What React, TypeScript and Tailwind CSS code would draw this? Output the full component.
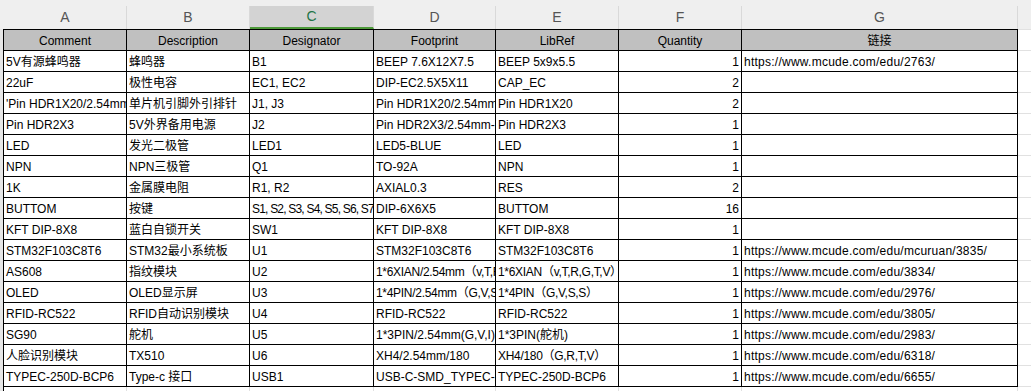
const colW = [
  "w-[123px]",
  "w-[123px]",
  "w-[124px]",
  "w-[122px]",
  "w-[123px]",
  "w-[123px]",
  "w-[276px]",
];

const letters = ["A", "B", "C", "D", "E", "F", "G"];
const heads = ["Comment", "Description", "Designator", "Footprint", "LibRef", "Quantity", "链接"];

const rows: string[][] = [
  ["5V有源蜂鸣器", "蜂鸣器", "B1", "BEEP 7.6X12X7.5", "BEEP 5x9x5.5", "1", "https://www.mcude.com/edu/2763/"],
  ["22uF", "极性电容", "EC1, EC2", "DIP-EC2.5X5X11", "CAP_EC", "2", ""],
  ["'Pin HDR1X20/2.54mm", "单片机引脚外引排针", "J1, J3", "Pin HDR1X20/2.54mm-S", "Pin HDR1X20", "2", ""],
  ["Pin HDR2X3", "5V外界备用电源", "J2", "Pin HDR2X3/2.54mm-S", "Pin HDR2X3", "1", ""],
  ["LED", "发光二极管", "LED1", "LED5-BLUE", "LED", "1", ""],
  ["NPN", "NPN三极管", "Q1", "TO-92A", "NPN", "1", ""],
  ["1K", "金属膜电阻", "R1, R2", "AXIAL0.3", "RES", "2", ""],
  ["BUTTOM", "按键", "S1, S2, S3, S4, S5, S6, S7", "DIP-6X6X5", "BUTTOM", "16", ""],
  ["KFT DIP-8X8", "蓝白自锁开关", "SW1", "KFT DIP-8X8", "KFT DIP-8X8", "1", ""],
  ["STM32F103C8T6", "STM32最小系统板", "U1", "STM32F103C8T6", "STM32F103C8T6", "1", "https://www.mcude.com/edu/mcuruan/3835/"],
  ["AS608", "指纹模块", "U2", "1*6XIAN/2.54mm（v,T,R,G,T,V）", "1*6XIAN（v,T,R,G,T,V）", "1", "https://www.mcude.com/edu/3834/"],
  ["OLED", "OLED显示屏", "U3", "1*4PIN/2.54mm（G,V,S,S）", "1*4PIN（G,V,S,S）", "1", "https://www.mcude.com/edu/2976/"],
  ["RFID-RC522", "RFID自动识别模块", "U4", "RFID-RC522", "RFID-RC522", "1", "https://www.mcude.com/edu/3805/"],
  ["SG90", "舵机", "U5", "1*3PIN/2.54mm(G,V,I)", "1*3PIN(舵机)", "1", "https://www.mcude.com/edu/2983/"],
  ["人脸识别模块", "TX510", "U6", "XH4/2.54mm/180", "XH4/180（G,R,T,V）", "1", "https://www.mcude.com/edu/6318/"],
  ["TYPEC-250D-BCP6", "Type-c 接口", "USB1", "USB-C-SMD_TYPEC-250D-BCP6", "TYPEC-250D-BCP6", "1", "https://www.mcude.com/edu/6655/"],
];

function cellExtra(text: string, col: number) {
  if (col === 5) return "text-right";
  if (col === 6) return "tracking-[0.25px]";
  if (text.startsWith("S1, S2")) return "tracking-[-0.8px]";
  if (text.includes("（")) return "tracking-[-0.3px]";
  return "";
}

export default function App() {
  return (
    <div className="w-[1031px] h-[391px] overflow-hidden bg-white font-['Liberation_Sans','Noto_Sans_CJK_SC',sans-serif] text-[12px] text-black">
      {/* column letters */}
      <div className="flex h-[29px] bg-[#efefef] pt-[6px]">
        <div className="w-[4px] shrink-0" />
        {letters.map((l, i) => (
          <div
            key={l}
            className={`${colW[i]} shrink-0 flex items-center justify-center border-r border-[#d9d9d9] text-[14px] ${
              l === "C"
                ? "bg-[#d3d3d3] text-[#217346] border-b-2 border-b-[#4e9a3a]"
                : "text-[#555]"
            }`}
          >
            {l}
          </div>
        ))}
        <div className="flex-1" />
      </div>

      <div className="flex">
        <div className="w-[3px] shrink-0 bg-[#e6e6e6]" />
        <div className="shrink-0 border-l border-t border-black">
          <div className="flex h-[21px] bg-[#c0c0c0]">
            {heads.map((h, i) => (
              <div
                key={h}
                className={`${colW[i]} shrink-0 border-r border-b border-black text-center leading-[22px]`}
              >
                {h}
              </div>
            ))}
          </div>
          {rows.map((r, ri) => (
            <div key={ri} className="flex h-[21px]">
              {r.map((c, i) => (
                <div
                  key={i}
                  className={`${colW[i]} shrink-0 overflow-hidden whitespace-nowrap border-r border-b border-black px-[2px] leading-[22px] ${cellExtra(c, i)}`}
                >
                  {c}
                </div>
              ))}
            </div>
          ))}
          <div className="flex h-[10px]">
            {colW.map((w, i) => (
              <div key={i} className={`${w} shrink-0 border-r border-[#e1e1e1]`} />
            ))}
          </div>
        </div>
        <div className="flex-1 border-t border-[#e1e1e1]">
          {Array.from({ length: 17 }).map((_, i) => (
            <div key={i} className="h-[21px] border-b border-[#e1e1e1]" />
          ))}
        </div>
      </div>
    </div>
  );
}
